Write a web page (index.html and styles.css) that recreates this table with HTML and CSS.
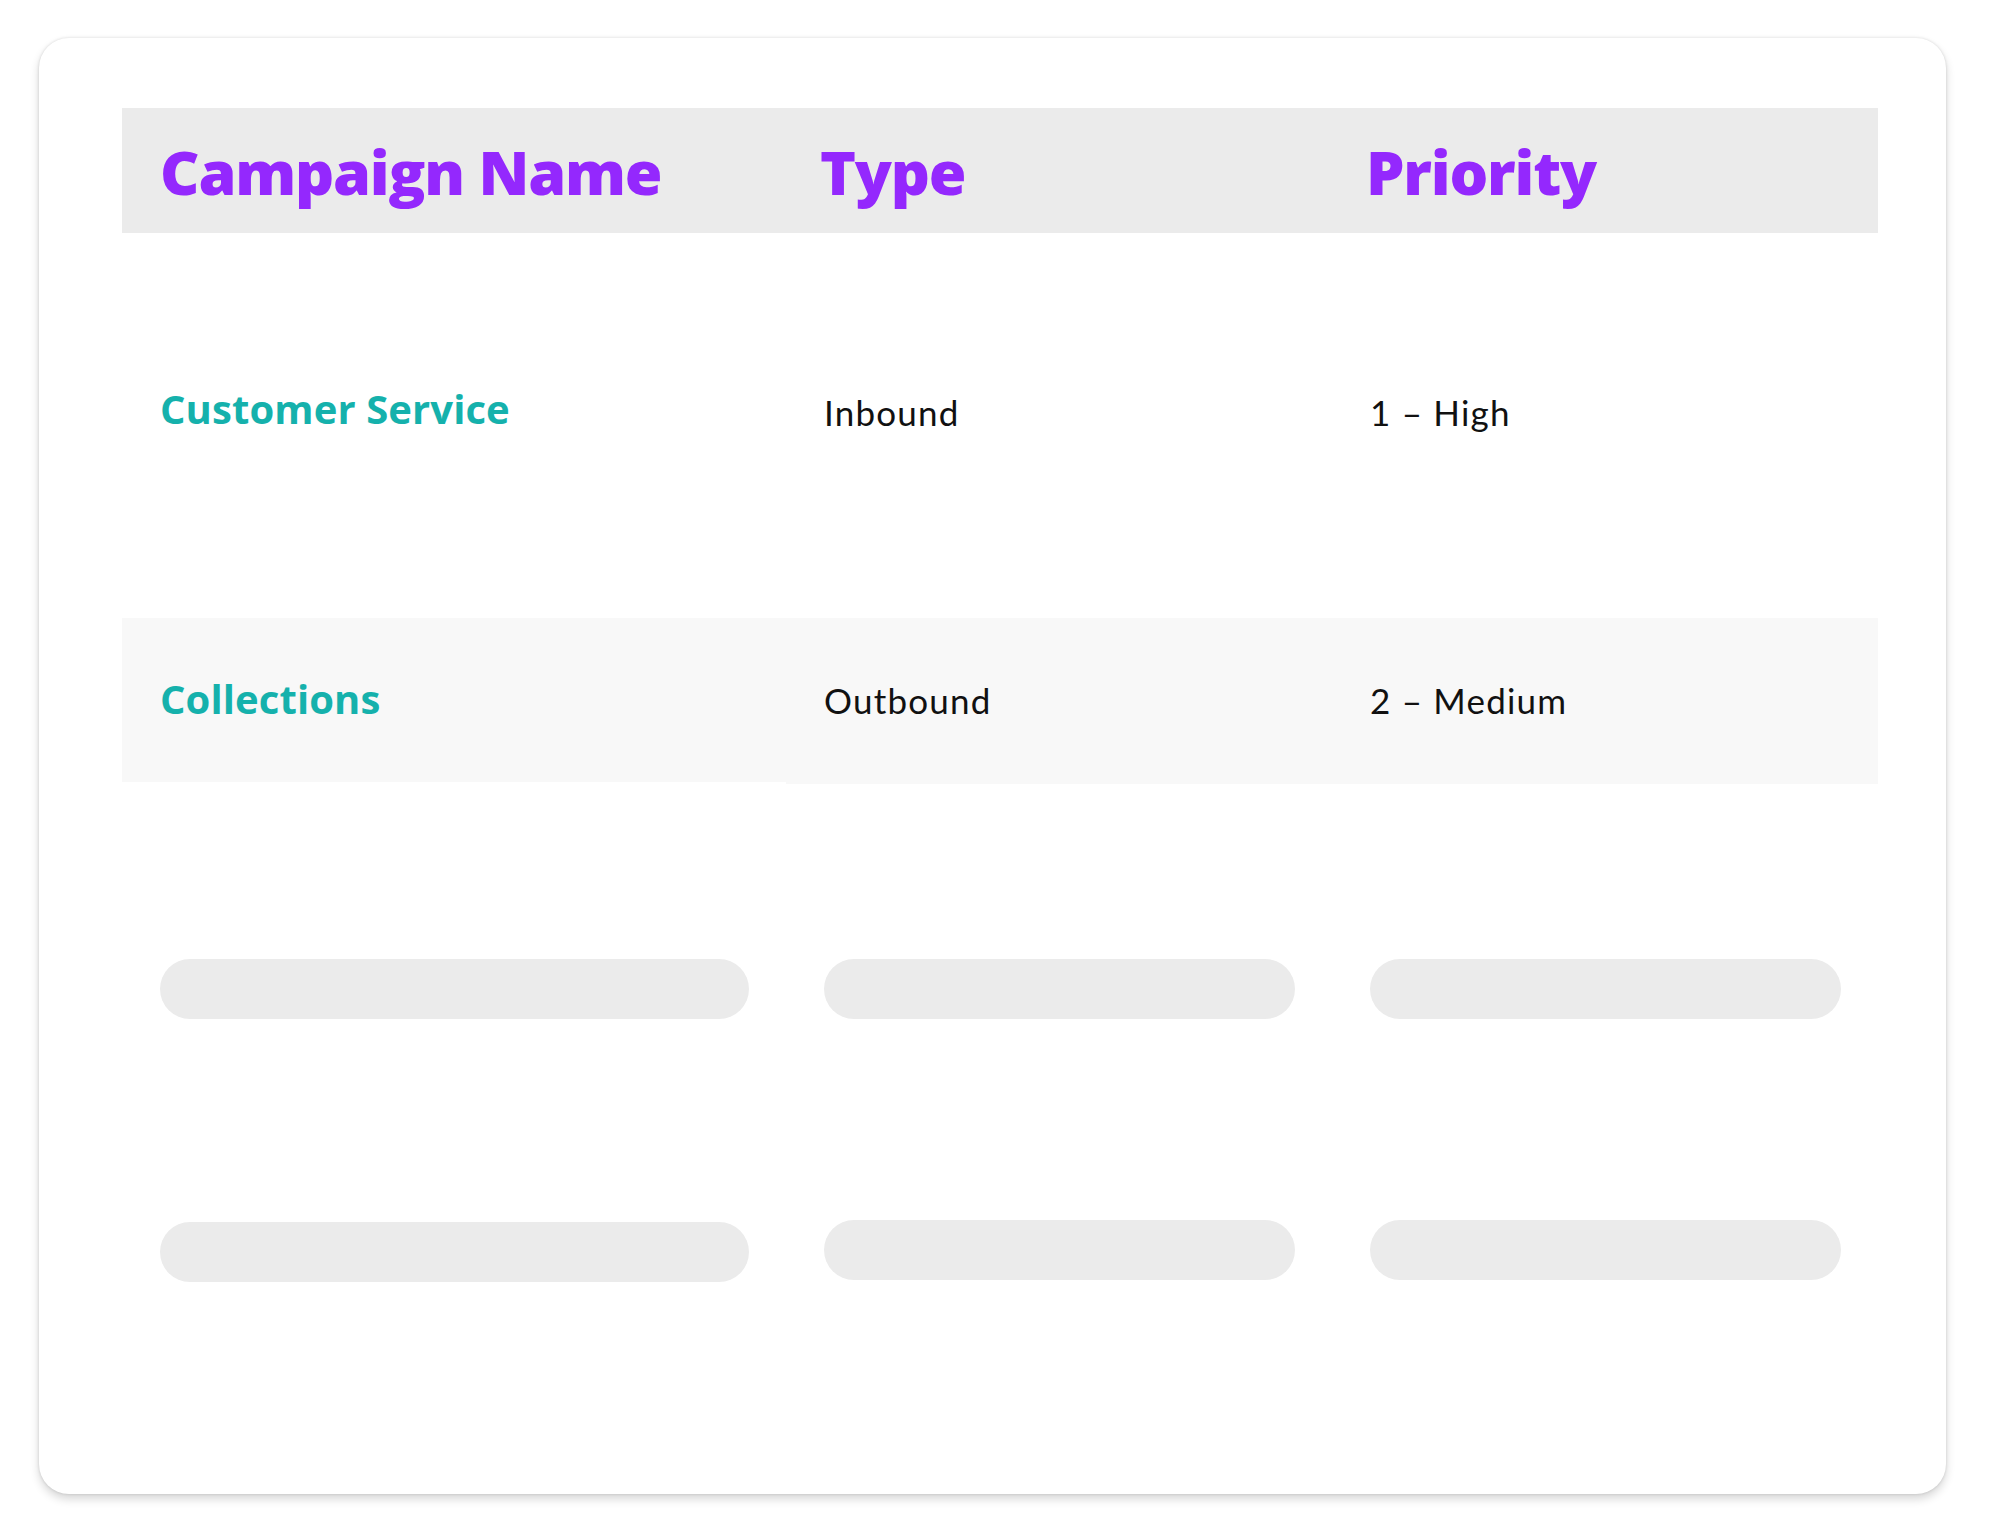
FILE: index.html
```html
<!DOCTYPE html>
<html>
<head>
<meta charset="utf-8">
<link rel="stylesheet" href="styles.css">
</head>
<body>
<div class="card">
  <div class="row head">
    <div class="cell">Campaign Name</div>
    <div class="cell shift">Type</div>
    <div class="cell shift">Priority</div>
  </div>
  <div class="row r1">
    <div class="cell name">Customer Service</div>
    <div class="cell val">Inbound</div>
    <div class="cell val">1 – High</div>
  </div>
  <div class="row r2">
    <div class="cell name first">Collections</div>
    <div class="cell val">Outbound</div>
    <div class="cell val">2 – Medium</div>
  </div>
  <div class="row sk sk1">
    <div class="cell"><div class="bar wide"></div></div>
    <div class="cell"><div class="bar"></div></div>
    <div class="cell"><div class="bar"></div></div>
  </div>
  <div class="row sk sk2">
    <div class="cell"><div class="bar wide low"></div></div>
    <div class="cell"><div class="bar"></div></div>
    <div class="cell"><div class="bar"></div></div>
  </div>
</div>
</body>
</html>
```
FILE: styles.css
```css
html, body {
  margin: 0;
  padding: 0;
  background: #ffffff;
}
body {
  width: 2000px;
  height: 1538px;
  font-family: Lato, "Noto Sans", sans-serif;
}
.card {
  box-sizing: border-box;
  margin: 38px 0 0 39px;
  width: 1907px;
  height: 1456px;
  padding: 70px 68px 0 83px;
  background: #ffffff;
  border-radius: 30px;
  box-shadow: 0 5px 10px rgba(0, 0, 0, 0.16), 0 0 3px rgba(0, 0, 0, 0.14);
}
.row {
  display: grid;
  grid-template-columns: 664px 546px 546px;
}
.cell {
  box-sizing: border-box;
  padding: 0 38px;
}
.head {
  height: 125px;
  background: #ebebeb;
  align-items: center;
}
.head .cell {
  font-family: "Open Sans", Lato, sans-serif;
  font-weight: 800;
  font-size: 61px;
  color: #9428fd;
  letter-spacing: -1.2px;
  line-height: 1;
  padding-top: 2px;
}
.head .cell.shift {
  padding-left: 34px;
}
.r1 {
  height: 385px;
  padding-bottom: 34px;
  box-sizing: border-box;
  align-items: center;
}
.name {
  font-family: "Open Sans", Lato, sans-serif;
  font-weight: 700;
  font-size: 40px;
  color: #15b1ac;
  letter-spacing: 0.1px;
}
.val {
  font-weight: 400;
  font-size: 35px;
  color: #111111;
  letter-spacing: 1.2px;
}
.r1 .val {
  padding-top: 6px;
}
.r2 {
  height: 166px;
  align-items: start;
}
.r2 .cell {
  height: 166px;
  background: #f8f8f8;
  display: flex;
  align-items: center;
  padding-bottom: 3px;
}
.r2 .cell.first {
  height: 164px;
}
.sk1 {
  padding-top: 175px;
}
.sk2 {
  padding-top: 201px;
}
.bar {
  height: 60px;
  width: 471px;
  border-radius: 30px;
  background: #ebebeb;
}
.bar.wide {
  width: 589px;
}
.bar.low {
  margin-top: 2px;
}
```
